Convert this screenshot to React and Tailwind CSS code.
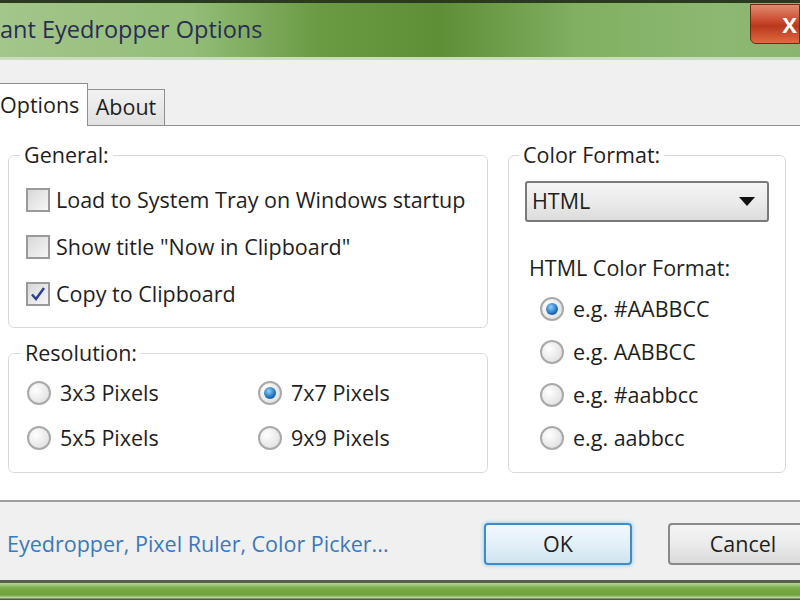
import { useState } from "react";

const font = { fontFamily: '"Open Sans", "Noto Sans", sans-serif' };

function Check({ checked, label }) {
  return (
    <div className="flex items-center gap-[6px] h-[24px]">
      <span className="w-[24px] h-[24px] shrink-0 border-2 border-[#9a9a9a] bg-[linear-gradient(135deg,#d8d8d8,#f6f6f6)] flex items-center justify-center">
        {checked && (
          <svg width="18" height="18" viewBox="0 0 18 18">
            <path d="M3 9.5 L7 14 L15 3" fill="none" stroke="#2c3f8f" strokeWidth="2.4" />
          </svg>
        )}
      </span>
      <span>{label}</span>
    </div>
  );
}

function Radio({ checked, label }) {
  return (
    <div className="flex items-center gap-[9px] h-[24px]">
      <span className="w-[24px] h-[24px] shrink-0 rounded-full border-2 border-[#a9a9a9] bg-[radial-gradient(circle_at_35%_35%,#ffffff,#d9d9d9)] flex items-center justify-center">
        {checked && (
          <span className="w-[12px] h-[12px] rounded-full bg-[radial-gradient(circle_at_40%_35%,#8fd0ff,#1f6fb8_60%,#0b3f7a)]" />
        )}
      </span>
      <span>{label}</span>
    </div>
  );
}

export default function App() {
  const [tab] = useState("options");

  return (
    <div className="w-[800px] h-[600px] overflow-hidden flex flex-col bg-[#f0f0f0] text-[#1e1e1e] text-[21.5px]" style={font}>
      {/* Title bar */}
      <div className="h-[60px] shrink-0 relative border-t-[3px] border-[#2a3a20] bg-[linear-gradient(90deg,#a3c68b_0%,#93bd78_24%,#6a9a42_40%,#5e8e36_55%,#80b060_72%,#8db873_90%,#8ab56e_100%)] border-b-[3px] border-b-[#c9dcbc]">
        <div className="h-full flex items-center text-[23.5px] text-[#2b2c55]">ant Eyedropper Options</div>
        <div className="absolute right-0 top-[1px] w-[50px] h-[40px] rounded-bl-[6px] border border-[#6b2a1a] bg-[linear-gradient(180deg,#e08b70_0%,#c8462a_45%,#b8381e_55%,#e06a40_100%)] flex items-center justify-end pr-[2px] text-white font-bold text-[22px]">
          X
        </div>
      </div>

      {/* Tabs */}
      <div className="h-[66px] shrink-0 flex items-end border-b border-[#8e8f8f] pt-[22px]">
        <div className="h-[43px] w-[89px] -ml-[1px] bg-white border border-[#8e8f8f] border-b-0 -mb-px flex items-center relative z-10">
          Options
        </div>
        <div className="h-[36px] w-[77px] bg-[linear-gradient(180deg,#f2f2f2,#e0e0e0)] border border-[#8e8f8f] border-l-0 border-b-0 flex items-center justify-center">
          About
        </div>
      </div>

      {/* Panel */}
      <div className="h-[376px] shrink-0 bg-white border-b-2 border-[#a0a0a0] flex gap-[20px] px-[8px] pt-[17px]">
        <div className="w-[480px] flex flex-col gap-[13px]">
          <fieldset className="h-[185px] border border-[#d5dadf] rounded-[6px] px-[17px]">
            <legend className="-ml-[6px] px-[4px] leading-[24px]">General:</legend>
            <div className="flex flex-col gap-[23px] pt-[21px]">
              <Check label="Load to System Tray on Windows startup" />
              <Check label={'Show title "Now in Clipboard"'} />
              <Check checked label="Copy to Clipboard" />
            </div>
          </fieldset>
          <fieldset className="h-[132px] border border-[#d5dadf] rounded-[6px] px-[18px]">
            <legend className="-ml-[6px] px-[4px] leading-[24px]">Resolution:</legend>
            <div className="grid grid-cols-[231px_1fr] gap-y-[21px] pt-[16px]">
              <Radio label="3x3 Pixels" />
              <Radio checked label="7x7 Pixels" />
              <Radio label="5x5 Pixels" />
              <Radio label="9x9 Pixels" />
            </div>
          </fieldset>
        </div>

        <fieldset className="w-[278px] h-[330px] border border-[#d5dadf] rounded-[6px] px-[16px]">
          <legend className="-ml-[6px] px-[4px] leading-[24px]">Color Format:</legend>
          <div className="mt-[14px] h-[41px] w-[244px] rounded-[3px] border-2 border-[#7a7a7a] bg-[linear-gradient(180deg,#f4f4f4_0%,#ebebeb_50%,#dcdcdc_100%)] flex items-center justify-between pl-[5px] pr-[12px]">
            <span>HTML</span>
            <svg width="16" height="10" viewBox="0 0 16 10">
              <path d="M0 0 H16 L8 9 Z" fill="#111" />
            </svg>
          </div>
          <div className="mt-[30px] pl-[4px]">HTML Color Format:</div>
          <div className="flex flex-col gap-[19px] pl-[15px] pt-[13px]">
            <Radio checked label="e.g. #AABBCC" />
            <Radio label="e.g. AABBCC" />
            <Radio label="e.g. #aabbcc" />
            <Radio label="e.g. aabbcc" />
          </div>
        </fieldset>
      </div>

      {/* Footer */}
      <div className="flex-1 flex items-center pl-[7px] pt-[6px]">
        <span className="text-[#3a78c0] w-[477px] shrink-0">Eyedropper, Pixel Ruler, Color Picker...</span>
        <button className="w-[148px] h-[42px] shrink-0 rounded-[4px] border-2 border-[#3c8dc8] shadow-[0_0_4px_#7fc4f0] bg-[linear-gradient(180deg,#f0f8fc_0%,#e3f0f8_50%,#cfe4f0_100%)]">
          OK
        </button>
        <button className="ml-[36px] w-[150px] h-[42px] shrink-0 rounded-[4px] border-2 border-[#8a8a8a] bg-[linear-gradient(180deg,#f4f4f4_0%,#ebebeb_50%,#dadada_100%)]">
          Cancel
        </button>
      </div>

      {/* Bottom frame */}
      <div className="h-[20px] shrink-0 border-t-[3px] border-[#56604c] bg-[linear-gradient(180deg,#b9d69c_0%,#7aac48_30%,#6ea03c_70%,#b7d59a_85%,#34402a_100%)]" />
    </div>
  );
}
